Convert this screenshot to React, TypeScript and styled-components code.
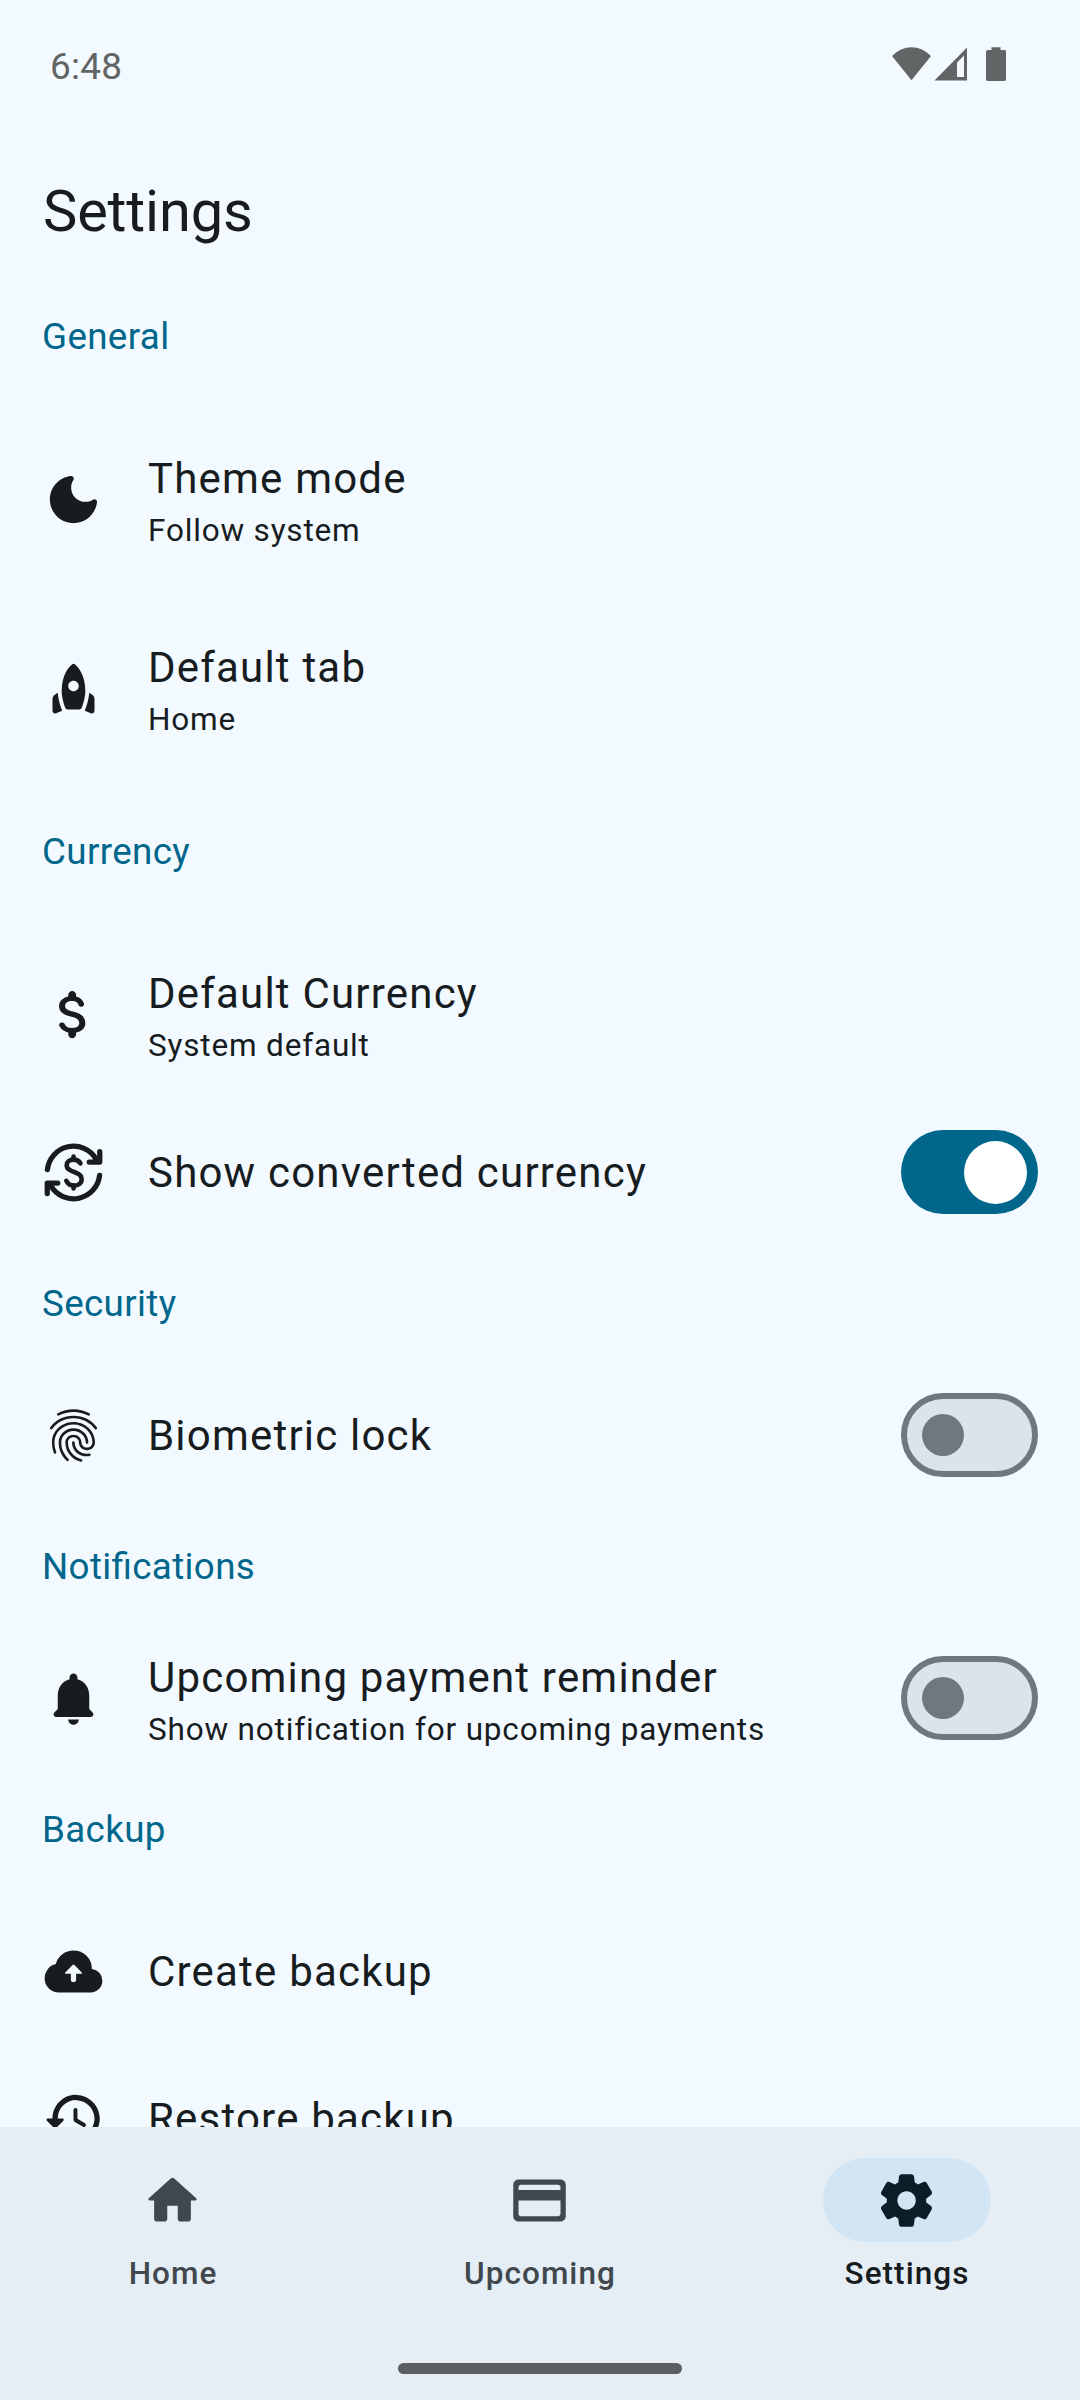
import React from "react";
import styled, { createGlobalStyle, css } from "styled-components";
import { MdFingerprint } from "react-icons/md";

const color = {
  background: "#f3faff",
  text: "#171c1f",
  primary: "#00668b",
  onPrimary: "#ffffff",
  outline: "#70777e",
  track: "#dce3ea",
  navBar: "#e6eef5",
  navMuted: "#40484e",
  navPill: "#d2e5f4",
  navActive: "#0a1e28",
  status: "#616565",
  handle: "#5b5f61",
};

const GlobalStyle = createGlobalStyle`
  *, *::before, *::after { box-sizing: border-box; }
  body {
    margin: 0;
    background: ${color.background};
    font-family: Roboto, "Noto Sans", sans-serif;
  }
`;

const Screen = styled.div`
  display: flex;
  flex-direction: column;
  width: 1080px;
  height: 2400px;
  overflow: hidden;
  background: ${color.background};
  color: ${color.text};
`;

const StatusBar = styled.header`
  display: flex;
  flex: none;
  align-items: center;
  justify-content: space-between;
  height: 132px;
  padding: 0 74px 0 50px;
  color: ${color.status};
`;

const Clock = styled.time`
  padding-top: 2px;
  font-size: 37px;
  line-height: 44px;
  letter-spacing: 0.2px;
`;

const StatusIcons = styled.svg`
  display: block;
  width: 114px;
  height: 36px;
  margin-bottom: 4px;
`;

const TitleBar = styled.div`
  display: flex;
  flex: none;
  align-items: center;
  height: 136px;
  padding: 22px 43px 0;
`;

const Title = styled.h1`
  margin: 0;
  font-size: 57.75px;
  font-weight: 400;
  line-height: 74px;
  letter-spacing: -0.15px;
`;

const Content = styled.main`
  flex: 1;
  min-height: 0;
  overflow: hidden;
`;

const SectionTitle = styled.h2`
  margin: 0;
  padding: 42px;
  color: ${color.primary};
  font-size: 36.75px;
  font-weight: 400;
  line-height: 53px;
  letter-spacing: 0.35px;
  font-feature-settings: "liga" 1;
`;

const Row = styled.div<{ $height: number }>`
  display: flex;
  align-items: center;
  gap: 43px;
  height: ${(p) => p.$height}px;
  padding: 0 42px;
`;

const IconSvg = styled.svg`
  display: block;
  flex: none;
  width: 63px;
  height: 63px;
`;

const Labels = styled.div`
  flex: 1;
  white-space: nowrap;
`;

const Label = styled.div`
  font-size: 42px;
  line-height: 63px;
  letter-spacing: 1.2px;
`;

const Hint = styled.div`
  font-size: 31.5px;
  line-height: 42px;
  letter-spacing: 0.82px;
`;

const Switch = styled.button<{ $on: boolean }>`
  display: flex;
  flex: none;
  align-items: center;
  width: 137px;
  height: 84px;
  border-radius: 42px;
  ${(p) =>
    p.$on
      ? css`
          justify-content: flex-end;
          padding: 0 11px;
          border: 0;
          background: ${color.primary};
        `
      : css`
          justify-content: flex-start;
          padding: 0 15px;
          border: 6px solid ${color.outline};
          background: ${color.track};
        `}
`;

const Thumb = styled.span<{ $on: boolean }>`
  width: ${(p) => (p.$on ? 63 : 42)}px;
  height: ${(p) => (p.$on ? 63 : 42)}px;
  border-radius: 50%;
  background: ${(p) => (p.$on ? color.onPrimary : color.outline)};
`;

const BottomBar = styled.footer`
  display: flex;
  flex: none;
  flex-direction: column;
  align-items: center;
  justify-content: space-between;
  height: 273px;
  padding: 31px 0 26px;
  background: ${color.navBar};
`;

const Tabs = styled.nav`
  display: grid;
  grid-template-columns: repeat(3, 1fr);
  gap: 21px;
  width: 100%;
`;

const Tab = styled.div<{ $active?: boolean }>`
  display: flex;
  flex-direction: column;
  align-items: center;
  gap: 11px;
  color: ${(p) => (p.$active ? color.text : color.navMuted)};
`;

const Pill = styled.div<{ $active?: boolean }>`
  display: flex;
  align-items: center;
  justify-content: center;
  width: 168px;
  height: 84px;
  padding-right: 1px;
  border-radius: 42px;
  background: ${(p) => (p.$active ? color.navPill : "transparent")};
  color: ${(p) => (p.$active ? color.navActive : color.navMuted)};
`;

const TabLabel = styled.span`
  font-size: 31.5px;
  font-weight: 500;
  line-height: 42px;
  letter-spacing: 1.05px;
`;

const GestureHandle = styled.div`
  width: 284px;
  height: 11px;
  border-radius: 6px;
  background: ${color.handle};
`;

const paths = {
  moon: "M11.01 3.05C6.51 3.54 3 7.36 3 12c0 4.97 4.03 9 9 9 4.63 0 8.45-3.5 8.95-8 .09-.79-.78-1.42-1.54-.95-.84.54-1.84.85-2.91.85-2.98 0-5.4-2.42-5.4-5.4 0-1.06.31-2.06.84-2.89.45-.67-.04-1.63-.93-1.56z",
  rocket:
    "M11.41 2.82c.34-.28.84-.28 1.18 0C13.79 3.8 16.5 6.8 16.5 13c0 2.17-.79 4.81-1.37 6.36-.14.38-.51.64-.93.64H9.8c-.42 0-.79-.26-.93-.64C8.29 17.81 7.5 15.17 7.5 13c0-6.2 2.71-9.2 3.91-10.18zM14 11c0-1.1-.9-2-2-2s-2 .9-2 2 .9 2 2 2 2-.9 2-2zm-6.31 9.52c-.48-1.23-1.52-4.17-1.67-6.87l-1.13.75C4.33 14.78 4 15.4 4 16.07v4.45c0 .71.71 1.19 1.37.93zm8.62 0c.48-1.23 1.52-4.17 1.67-6.87l1.13.75c.56.38.89 1 .89 1.67v4.45c0 .71-.71 1.19-1.37.93z",
  dollar:
    "M11.8 10.9c-2.27-.59-3-1.2-3-2.15 0-1.09 1.01-1.85 2.7-1.85 1.42 0 2.13.54 2.39 1.4.12.4.45.7.87.7h.3c.66 0 1.13-.65.9-1.27-.42-1.18-1.4-2.16-2.96-2.54V4.5c0-.83-.67-1.5-1.5-1.5S10 3.67 10 4.5v.66c-1.94.42-3.5 1.68-3.5 3.61 0 2.31 1.91 3.46 4.7 4.13 2.5.6 3 1.48 3 2.41 0 .69-.49 1.79-2.7 1.79-1.65 0-2.5-.59-2.83-1.43-.15-.39-.49-.67-.9-.67h-.28c-.67 0-1.14.68-.89 1.3.57 1.39 1.9 2.21 3.4 2.53v.67c0 .83.67 1.5 1.5 1.5s1.5-.67 1.5-1.5v-.65c1.95-.37 3.5-1.5 3.5-3.55 0-2.84-2.43-3.81-4.7-4.4z",
  bell: "M12 22c1.1 0 2-.9 2-2h-4c0 1.1.89 2 2 2zm6-6v-5c0-3.07-1.64-5.64-4.5-6.32V4c0-.83-.67-1.5-1.5-1.5s-1.5.67-1.5 1.5v.68C7.63 5.36 6 7.92 6 11v5l-1.29 1.29c-.63.63-.19 1.71.7 1.71h13.17c.89 0 1.34-1.08.71-1.71L18 16z",
  cloud:
    "M6.5 20q-2.28 0-3.89-1.57Q1 16.85 1 14.58q0-1.95 1.17-3.48 1.18-1.53 3.08-1.95.63-2.3 2.5-3.72Q9.63 4 12 4q2.93 0 4.96 2.04Q19 8.07 19 11q1.73.2 2.86 1.5Q23 13.78 23 15.5q0 1.88-1.31 3.19T18.5 20zM11 12.9v2.2q0 .9 1 .9t1-.9v-2.2h1.8q.75 0 .25-.6l-2.7-2.75q-.35-.35-.7 0l-2.7 2.75q-.5.6.25.6z",
  history:
    "M13.26 3C8.17 2.86 4 6.95 4 12H2.21c-.45 0-.67.54-.35.85l2.79 2.8c.2.2.51.2.71 0l2.79-2.8c.31-.31.09-.85-.36-.85H6c0-3.9 3.18-7.05 7.1-7 3.72.05 6.85 3.18 6.9 6.9.05 3.91-3.1 7.1-7 7.1-1.61 0-3.1-.55-4.28-1.47-.4-.31-.96-.28-1.32.08-.42.42-.39 1.13.08 1.49C9 20.29 10.91 21 13 21c5.05 0 9.14-4.17 9-9.26-.13-4.69-4.05-8.61-8.74-8.74zM12.75 8c-.41 0-.75.34-.75.75v3.68c0 .35.19.68.49.86l3.12 1.85c.36.21.82.09 1.03-.26.21-.36.1-.82-.26-1.03l-2.88-1.71v-3.4c0-.4-.34-.74-.75-.74z",
  home: "M10 19v-5h4v5c0 .55.45 1 1 1h3c.55 0 1-.45 1-1v-7h1.7c.46 0 .68-.57.33-.87L12.67 3.6c-.38-.34-.96-.34-1.34 0l-8.36 7.53c-.34.3-.13.87.33.87H5v7c0 .55.45 1 1 1h3c.55 0 1-.45 1-1z",
  card: "M20 4H4c-1.11 0-1.99.89-1.99 2L2 18c0 1.11.89 2 2 2h16c1.11 0 2-.89 2-2V6c0-1.11-.89-2-2-2zm-1 14H5c-.55 0-1-.45-1-1v-5h16v5c0 .55-.45 1-1 1zm1-10H4V7c0-.55.45-1 1-1h14c.55 0 1 .45 1 1z",
  gear: "M19.5 12c0-.23-.01-.45-.03-.68l1.86-1.41c.4-.3.51-.86.26-1.3l-1.87-3.23c-.25-.44-.79-.62-1.25-.42l-2.15.91c-.37-.26-.76-.49-1.17-.68l-.29-2.31c-.06-.5-.49-.88-.99-.88h-3.73c-.51 0-.94.38-1 .88l-.29 2.31c-.41.19-.8.42-1.17.68l-2.15-.91c-.46-.2-1-.02-1.25.42L2.41 8.62c-.25.44-.14.99.26 1.3l1.86 1.41c-.02.22-.03.44-.03.67s.01.45.03.68l-1.86 1.41c-.4.3-.51.86-.26 1.3l1.87 3.23c.25.44.79.62 1.25.42l2.15-.91c.37.26.76.49 1.17.68l.29 2.31c.06.5.49.88.99.88h3.73c.5 0 .93-.38.99-.88l.29-2.31c.41-.19.8-.42 1.17-.68l2.15.91c.46.2 1 .02 1.25-.42l1.87-3.23c.25-.44.14-.99-.26-1.3l-1.86-1.41c.03-.23.04-.45.04-.68zm-7.46 3.5c-1.93 0-3.5-1.57-3.5-3.5s1.57-3.5 3.5-3.5 3.5 1.57 3.5 3.5-1.57 3.5-3.5 3.5z",
};

function Icon({ name }: { name: keyof typeof paths }) {
  return (
    <IconSvg viewBox="0 0 24 24" fill="currentColor" aria-hidden="true">
      <path fillRule="evenodd" d={paths[name]} />
    </IconSvg>
  );
}

function ExchangeIcon() {
  return (
    <IconSvg
      viewBox="0 0 24 24"
      fill="none"
      stroke="currentColor"
      strokeWidth="2"
      strokeLinecap="round"
      strokeLinejoin="round"
      aria-hidden="true"
    >
      <path d="M2.05 10.9A10 10 0 0 1 20.6 6.9" />
      <path d="M22 4v4h-4" />
      <path d="M21.95 13.1A10 10 0 0 1 3.4 17.1" />
      <path d="M2 20v-4h4" />
      <path
        strokeWidth="1.75"
        d="M14.65 8.55C14.2 7.7 13.3 7.1 12.1 7.1c-1.55 0-2.7.8-2.7 2.1 0 1.45 1.25 2.05 3.1 2.7 1.75.6 2.6 1.35 2.6 2.65 0 1.6-1.3 2.45-2.9 2.45-1.5 0-2.45-.75-2.95-1.85"
      />
      <path strokeWidth="1.75" d="M12.02 5.95V7M12.02 17v1.1" />
    </IconSvg>
  );
}

function FingerprintIcon() {
  return (
    <IconSvg as="span">
      <MdFingerprint size={63} />
    </IconSvg>
  );
}

type Item = {
  icon: React.ReactNode;
  label: string;
  hint?: string;
  height: number;
  on?: boolean;
};

const sections: { title: string; items: Item[] }[] = [
  {
    title: "General",
    items: [
      { icon: <Icon name="moon" />, label: "Theme mode", hint: "Follow system", height: 189 },
      { icon: <Icon name="rocket" />, label: "Default tab", hint: "Home", height: 189 },
    ],
  },
  {
    title: "Currency",
    items: [
      { icon: <Icon name="dollar" />, label: "Default Currency", hint: "System default", height: 189 },
      { icon: <ExchangeIcon />, label: "Show converted currency", height: 126, on: true },
    ],
  },
  {
    title: "Security",
    items: [{ icon: <FingerprintIcon />, label: "Biometric lock", height: 126, on: false }],
  },
  {
    title: "Notifications",
    items: [
      {
        icon: <Icon name="bell" />,
        label: "Upcoming payment reminder",
        hint: "Show notification for upcoming payments",
        height: 126,
        on: false,
      },
    ],
  },
  {
    title: "Backup",
    items: [
      { icon: <Icon name="cloud" />, label: "Create backup", height: 147 },
      { icon: <Icon name="history" />, label: "Restore backup", height: 147 },
    ],
  },
];

const tabs: { icon: keyof typeof paths; label: string; active?: boolean }[] = [
  { icon: "home", label: "Home" },
  { icon: "card", label: "Upcoming" },
  { icon: "gear", label: "Settings", active: true },
];

export default function App() {
  return (
    <>
      <GlobalStyle />
      <Screen>
        <StatusBar>
          <Clock>6:48</Clock>
          <StatusIcons viewBox="0 0 114 36" fill="currentColor" aria-hidden="true">
            <path d="M0 10Q8.5 1.2 19.5 1.2T39 10L19.5 34.2z" />
            <path fillRule="evenodd" d="M75 1.5v33H42.5zM72 9.5L65 16.5v14.5h7z" />
            <path d="M99.5 1.2h9V4h3.8q1.8 0 1.8 1.8v27.4q0 1.8-1.8 1.8H95.8q-1.8 0-1.8-1.8V5.8Q94 4 95.8 4h3.7z" />
          </StatusIcons>
        </StatusBar>
        <TitleBar>
          <Title>Settings</Title>
        </TitleBar>
        <Content>
          {sections.map((section) => (
            <section key={section.title}>
              <SectionTitle>{section.title}</SectionTitle>
              {section.items.map((item) => (
                <Row key={item.label} $height={item.height}>
                  {item.icon}
                  <Labels>
                    <Label>{item.label}</Label>
                    {item.hint && <Hint>{item.hint}</Hint>}
                  </Labels>
                  {item.on !== undefined && (
                    <Switch $on={item.on} role="switch" aria-checked={item.on} aria-label={item.label}>
                      <Thumb $on={item.on} />
                    </Switch>
                  )}
                </Row>
              ))}
            </section>
          ))}
        </Content>
        <BottomBar>
          <Tabs>
            {tabs.map((tab) => (
              <Tab key={tab.label} $active={tab.active}>
                <Pill $active={tab.active}>
                  <Icon name={tab.icon} />
                </Pill>
                <TabLabel>{tab.label}</TabLabel>
              </Tab>
            ))}
          </Tabs>
          <GestureHandle />
        </BottomBar>
      </Screen>
    </>
  );
}
